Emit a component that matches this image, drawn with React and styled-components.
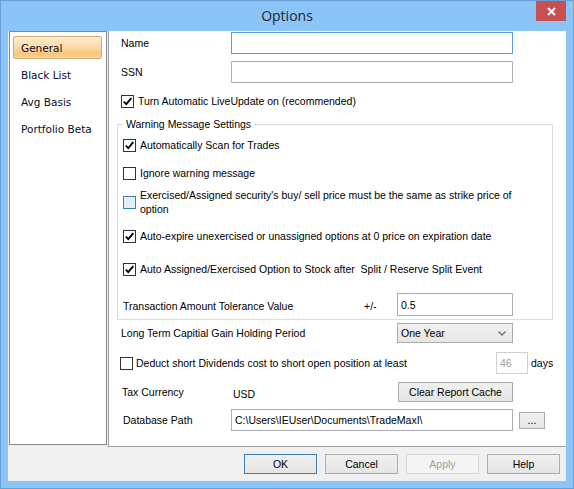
import React from "react";
import styled, { createGlobalStyle, css } from "styled-components";

const GlobalStyle = createGlobalStyle`
  html, body {
    margin: 0;
    padding: 0;
  }
  body {
    width: 574px;
    height: 489px;
    overflow: hidden;
    background: #8bc4f7;
    font-family: "Liberation Sans", Arial, sans-serif;
    font-size: 10.5px;
    color: #000;
  }
`;

const Window = styled.div`
  width: 574px;
  height: 489px;
  box-sizing: border-box;
  border: 1px solid #6b9ed6;
  background: #8bc4f7;
  display: flex;
  flex-direction: column;
`;

const TitleBar = styled.div`
  height: 30px;
  flex-shrink: 0;
  display: grid;
  grid-template-columns: 1fr auto 1fr;
  align-items: start;
`;

const Title = styled.div`
  grid-column: 2;
  line-height: 29px;
  font-family: "Open Sans", "Noto Sans", sans-serif;
  font-size: 14px;
  color: #262626;
`;

const CloseButton = styled.div`
  grid-column: 3;
  justify-self: end;
  width: 30px;
  height: 20px;
  margin-right: 7px;
  background: #c75050;
  display: flex;
  align-items: center;
  justify-content: center;
`;

const Client = styled.div`
  margin: 0 7px 7px;
  height: 450px;
  background: #f0f0f0;
  display: flex;
  flex-direction: column;
`;

const Main = styled.div`
  display: flex;
  height: 416px;
  flex-shrink: 0;
`;

const Sidebar = styled.div`
  margin-left: 1px;
  width: 98px;
  height: 414px;
  box-sizing: border-box;
  border: 1px solid #828790;
  background: #fff;
  padding: 4px 0 0 3px;
  display: flex;
  flex-direction: column;
  gap: 4px;
`;

const NavItem = styled.div`
  width: 89px;
  height: 23px;
  box-sizing: border-box;
  padding-left: 7px;
  display: flex;
  align-items: center;
  font-family: "DejaVu Sans", Verdana, sans-serif;
  font-size: 10.5px;
  color: #0c0c28;
  border: 1px solid transparent;
  border-radius: 2px;
  ${(p) =>
    p.$active &&
    css`
      border-color: #d3ac74;
      background: linear-gradient(
        #fdebcd 0%,
        #fcdcab 45%,
        #f9c57c 80%,
        #fbd69c 100%
      );
    `}
`;

const Panel = styled.div`
  flex: 1;
  margin-left: 1px;
  height: 416px;
  box-sizing: border-box;
  background: #fff;
  border-left: 1px solid #a0a0a0;
  border-bottom: 1px solid #a0a0a0;
  padding: 1px 0 0 8px;
`;

const Row = styled.div`
  display: flex;
  align-items: center;
  height: ${(p) => p.$h || 18}px;
  margin-top: ${(p) => p.$mt || 0}px;
  padding-left: ${(p) => p.$pl || 0}px;
`;

const Label = styled.span`
  width: ${(p) => p.$w}px;
  flex-shrink: 0;
  white-space: nowrap;
  margin-top: ${(p) => p.$dy || 0}px;
`;

const Text = styled.span`
  margin-left: ${(p) => p.$ml ?? 4}px;
  line-height: 14px;
  white-space: ${(p) => (p.$wrap ? "normal" : "nowrap")};
  width: ${(p) => (p.$w ? `${p.$w}px` : "auto")};
  flex-shrink: 0;
`;

const Input = styled.div`
  width: ${(p) => p.$w}px;
  height: ${(p) => p.$h || 22}px;
  box-sizing: border-box;
  border: 1px solid ${(p) => (p.$focus ? "#569de5" : p.$disabled ? "#cfcfcf" : "#abadb3")};
  background: #fff;
  color: ${(p) => (p.$disabled ? "#9a9a9a" : "#000")};
  padding: 0 3px;
  display: flex;
  align-items: center;
  flex-shrink: 0;
  white-space: nowrap;
`;

const Select = styled.div`
  width: 116px;
  height: 20px;
  box-sizing: border-box;
  border: 1px solid #acacac;
  background: linear-gradient(#f2f2f2, #e5e5e5);
  padding: 0 6px 0 3px;
  display: flex;
  align-items: center;
  justify-content: space-between;
`;

const Button = styled.div`
  width: ${(p) => p.$w}px;
  height: ${(p) => p.$h || 20}px;
  box-sizing: border-box;
  flex-shrink: 0;
  margin-left: ${(p) => p.$ml || 0}px;
  display: flex;
  align-items: center;
  justify-content: center;
  border: 1px solid #acacac;
  background: linear-gradient(#f0f0f0, #e5e5e5);
  color: #000;
  ${(p) =>
    p.$default &&
    css`
      border-color: #3c7fb1;
    `}
  ${(p) =>
    p.$disabled &&
    css`
      border-color: #d9d9d9;
      background: #f4f4f4;
      color: #a0a0a0;
    `}
`;

const Box = styled.span`
  width: 13px;
  height: 13px;
  box-sizing: border-box;
  flex-shrink: 0;
  border: 1px solid ${(p) => (p.$hover ? "#3c7fb1" : "#333")};
  background: ${(p) => (p.$hover ? "#e3f0fb" : "#fff")};
  display: inline-flex;
  align-items: center;
  justify-content: center;
`;

const Group = styled.fieldset`
  margin: 5px 0 0 0;
  width: 436px;
  box-sizing: border-box;
  border: 1px solid #dcdcdc;
  padding: 0 0 3px 5px;
  min-inline-size: auto;
`;

const Legend = styled.legend`
  padding: 0 3px;
  line-height: 14px;
  font-size: 10.5px;
`;

const Footer = styled.div`
  flex: 1;
  display: flex;
  justify-content: flex-end;
  align-items: flex-start;
  gap: 8px;
  padding: 7px 6px 0 0;
`;

function Checkbox({ checked, hover }) {
  return (
    <Box $hover={hover}>
      {checked && (
        <svg width="11" height="11" viewBox="0 0 11 11">
          <path d="M1.8 5.6 L4.3 8.2 L9.3 2.2" fill="none" stroke="#000" strokeWidth="1.9" />
        </svg>
      )}
    </Box>
  );
}

const navItems = ["General", "Black List", "Avg Basis", "Portfolio Beta"];

export default function App() {
  return (
    <>
      <GlobalStyle />
      <Window>
        <TitleBar>
          <Title>Options</Title>
          <CloseButton>
            <svg width="9" height="9" viewBox="0 0 9 9">
              <path d="M1 1 L8 8 M8 1 L1 8" stroke="#fff" strokeWidth="2" />
            </svg>
          </CloseButton>
        </TitleBar>
        <Client>
          <Main>
            <Sidebar>
              {navItems.map((item, i) => (
                <NavItem key={item} $active={i === 0}>
                  {item}
                </NavItem>
              ))}
            </Sidebar>
            <Panel>
              <Row $h={22} $pl={4}>
                <Label $w={110}>Name</Label>
                <Input $w={282} $focus />
              </Row>
              <Row $h={22} $mt={7} $pl={4}>
                <Label $w={110}>SSN</Label>
                <Input $w={282} />
              </Row>
              <Row $h={22} $mt={7} $pl={4}>
                <Checkbox checked />
                <Text>Turn Automatic LiveUpdate on (recommended)</Text>
              </Row>

              <Group>
                <Legend>Warning Message Settings</Legend>
                <Row $mt={5}>
                  <Checkbox checked />
                  <Text>Automatically Scan for Trades</Text>
                </Row>
                <Row $mt={10}>
                  <Checkbox />
                  <Text>Ignore warning message</Text>
                </Row>
                <Row $h={28} $mt={6}>
                  <Checkbox hover />
                  <Text $wrap $w={380}>
                    Exercised/Assigned security's buy/ sell price must be the same as strike price of option
                  </Text>
                </Row>
                <Row $mt={11}>
                  <Checkbox checked />
                  <Text>Auto-expire unexercised or unassigned options at 0 price on expiration date</Text>
                </Row>
                <Row $mt={15}>
                  <Checkbox checked />
                  <Text>Auto Assigned/Exercised Option to Stock after&nbsp; Split / Reserve Split Event</Text>
                </Row>
                <Row $h={23} $mt={15}>
                  <Label $w={241} $dy={2}>Transaction Amount Tolerance Value</Label>
                  <Label $w={33} $dy={2}>+/-</Label>
                  <Input $w={116} $h={23}>0.5</Input>
                </Row>
              </Group>

              <Row $h={20} $mt={3} $pl={4}>
                <Label $w={276}>Long Term Capitial Gain Holding Period</Label>
                <Select>
                  <span>One Year</span>
                  <svg width="8" height="5" viewBox="0 0 8 5">
                    <path d="M0.5 0.5 L4 4 L7.5 0.5" fill="none" stroke="#707070" strokeWidth="1.3" />
                  </svg>
                </Select>
              </Row>
              <Row $h={22} $mt={9} $pl={3}>
                <Checkbox />
                <Text $ml={3} $w={360}>Deduct short Dividends cost to short open position at least</Text>
                <Input $w={32} $disabled>46</Input>
                <Text $ml={3}>days</Text>
              </Row>
              <Row $h={20} $mt={8} $pl={5}>
                <Label $w={111}>Tax Currency</Label>
                <Label $w={165} $dy={4}>USD</Label>
                <Button $w={115}>Clear Report Cache</Button>
              </Row>
              <Row $h={22} $mt={7} $pl={6}>
                <Label $w={108}>Database Path</Label>
                <Input $w={282}>C:\Users\IEUser\Documents\TradeMaxI\</Input>
                <Button $w={26} $h={17} $ml={6}>...</Button>
              </Row>
            </Panel>
          </Main>
          <Footer>
            <Button $w={73} $default>OK</Button>
            <Button $w={73}>Cancel</Button>
            <Button $w={73} $disabled>Apply</Button>
            <Button $w={73}>Help</Button>
          </Footer>
        </Client>
      </Window>
    </>
  );
}
